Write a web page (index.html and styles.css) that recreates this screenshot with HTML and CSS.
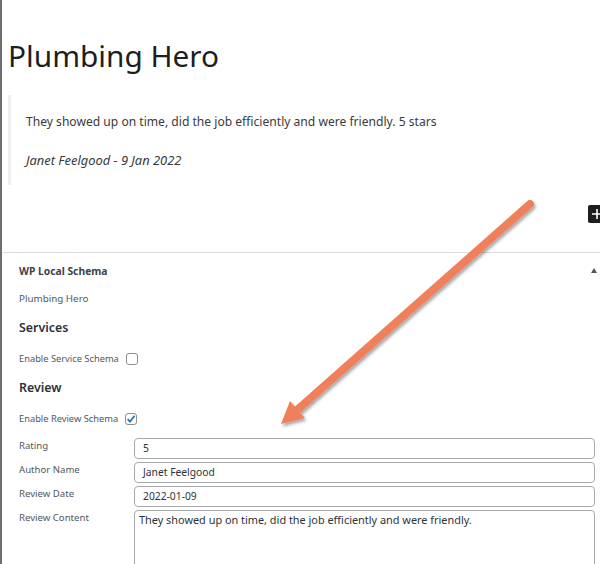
FILE: index.html
```
<!DOCTYPE html>
<html lang="en">
<head>
<meta charset="utf-8">
<title>Plumbing Hero</title>
<link rel="stylesheet" href="styles.css">
</head>
<body>
<div class="page">
  <div class="editor">
    <h1 class="title">Plumbing Hero</h1>
    <blockquote class="quote">
      <p class="quote-text">They showed up on time, did the job efficiently and were friendly. 5 stars</p>
      <p class="quote-cite">Janet Feelgood - 9 Jan 2022</p>
    </blockquote>
    <div class="inserter-row"><span class="inserter"><svg viewBox="0 0 18 18" width="18" height="18"><path d="M9 4v10M4 9h10" stroke="#fff" stroke-width="1.6"/></svg></span></div>
  </div>
  <section class="metabox">
    <header class="mb-head">
      <h2 class="mb-title">WP Local Schema</h2>
      <span class="toggle"></span>
    </header>
    <div class="mb-body">
      <p class="site">Plumbing Hero</p>
      <h3 class="sec">Services</h3>
      <label class="check-row">Enable Service Schema <span class="cb"></span></label>
      <h3 class="sec">Review</h3>
      <label class="check-row">Enable Review Schema <span class="cb"><svg viewBox="0 0 12 12" width="12" height="12"><path d="M2.6 6.2 L5 8.6 L9.6 2.8" fill="none" stroke="#2271b1" stroke-width="1.7"/></svg></span></label>
      <div class="fields">
        <span class="lbl">Rating</span><div class="inp">5</div>
        <span class="lbl">Author Name</span><div class="inp">Janet Feelgood</div>
        <span class="lbl">Review Date</span><div class="inp">2022-01-09</div>
        <span class="lbl">Review Content</span><div class="inp ta">They showed up on time, did the job efficiently and were friendly.</div>
      </div>
    </div>
  </section>
  <svg class="arrow" viewBox="0 0 600 564" width="600" height="564">
    <defs>
      <filter id="sh" x="-20%" y="-20%" width="140%" height="140%">
        <feDropShadow dx="1.5" dy="2.5" stdDeviation="1.5" flood-color="#000" flood-opacity="0.35"/>
      </filter>
    </defs>
    <g filter="url(#sh)">
      <line x1="530" y1="204" x2="296" y2="411" stroke="#f07f5b" stroke-width="8" stroke-linecap="round"/>
      <polygon points="281,424 290,401 305,418" fill="#f07f5b"/>
    </g>
  </svg>
</div>
</body>
</html>
```
FILE: styles.css
```
* { box-sizing: border-box; }
html, body { margin: 0; padding: 0; background: #fff; }
body { font-family: "Noto Sans", "Open Sans", sans-serif; }
.page {
  position: relative;
  width: 600px;
  height: 564px;
  overflow: hidden;
  border-left: 2px solid #6e6e6e;
}
.page::before {
  content: "";
  position: absolute;
  left: -2px;
  top: 33px;
  width: 2px;
  height: 10px;
  background: #72aee6;
}
.editor { padding: 34px 0 0 6px; }
.title {
  margin: 0;
  font-weight: 400;
  font-size: 29.8px;
  line-height: 44px;
  color: #1e1e1e;
}
.quote {
  margin: 17px 0 0 0;
  border-left: 3px solid #efefef;
  padding: 17px 0 15px 15px;
}
.quote p { margin: 0; font-size: 12.1px; line-height: 20px; color: #3a3a3a; }
.quote .quote-cite { margin-top: 18px; font-style: italic; font-size: 12.9px; }
.inserter-row {
  display: flex;
  justify-content: flex-end;
  padding-top: 20px;
  height: 67px;
}
.inserter {
  width: 18px;
  height: 18px;
  margin-right: -6px;
  background: #1e1e1e;
  border-radius: 2px;
  display: flex;
}
.metabox { border-top: 1px solid #dcdcde; }
.mb-head {
  display: flex;
  align-items: center;
  justify-content: space-between;
  height: 35px;
  padding: 0 3px 0 17px;
}
.mb-title { margin: 0; font-size: 10.3px; font-weight: 700; color: #3c434a; }
.toggle {
  width: 0; height: 0;
  border-left: 3px solid transparent;
  border-right: 3px solid transparent;
  border-bottom: 5px solid #50575e;
}
.mb-body { padding: 1px 5px 0 17px; color: #50575e; }
.site { margin: 0; font-size: 9.8px; line-height: 20px; }
.sec { margin: 8px 0 10px; font-size: 12.4px; line-height: 22px; font-weight: 600; color: #2c3338; }
.check-row { display: flex; align-items: center; gap: 7px; font-size: 9.3px; line-height: 20px; }
.cb {
  width: 12px; height: 12px;
  border: 1px solid #8c8f94;
  border-radius: 3px;
  display: flex;
  background: #fff;
}
.cb svg { margin: -1px; }
.fields {
  margin-top: 9px;
  display: grid;
  grid-template-columns: 115px 1fr;
  grid-auto-rows: 21px;
  row-gap: 3px;
}
.lbl { font-size: 9.6px; line-height: 16px; }
.inp {
  border: 1px solid #a7aaad;
  border-radius: 4px;
  padding: 0 8px;
  font-size: 10.3px;
  line-height: 19px;
  color: #2c3338;
  background: #fff;
}
.inp.ta { height: 80px; padding: 2px 4px; line-height: 14px; font-size: 10.9px; }
.arrow { position: absolute; left: -2px; top: 0; pointer-events: none; }
```
